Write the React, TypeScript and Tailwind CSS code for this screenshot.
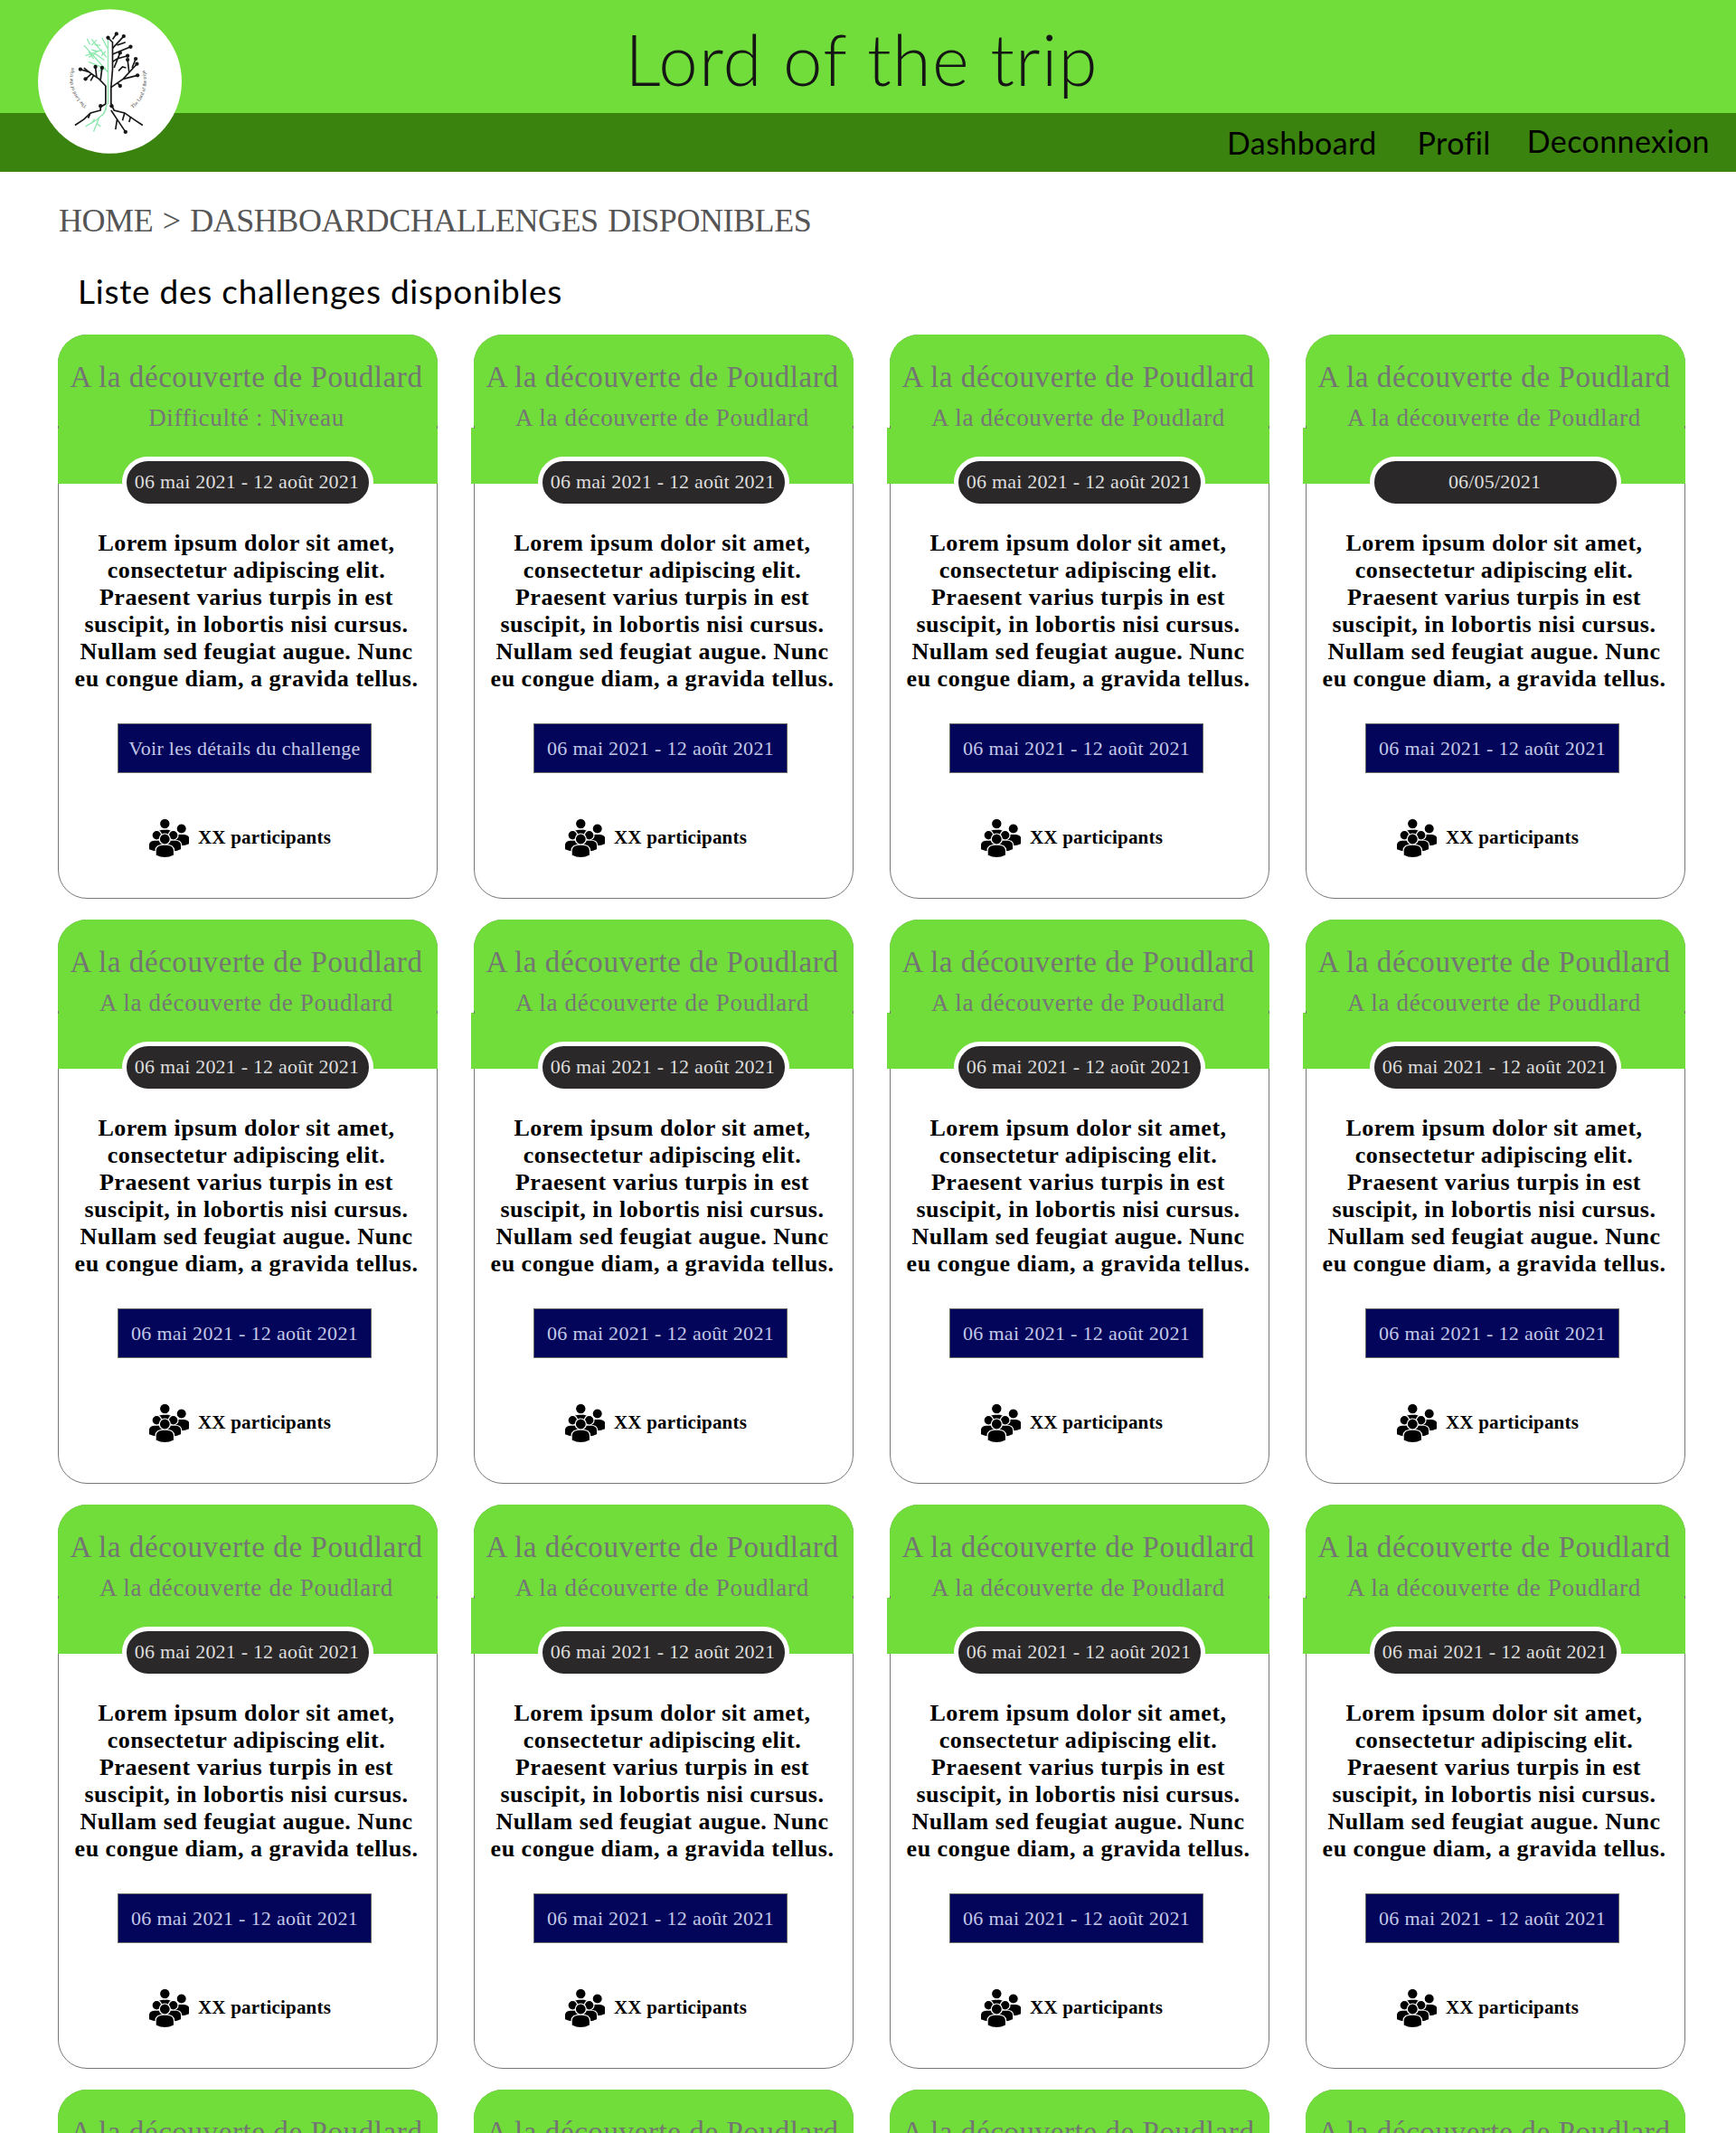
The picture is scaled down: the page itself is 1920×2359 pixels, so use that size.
const DATE = "06 mai 2021 - 12 août 2021";
const LOREM = [
  "Lorem ipsum dolor sit amet,",
  "consectetur adipiscing elit.",
  "Praesent varius turpis in est",
  "suscipit, in lobortis nisi cursus.",
  "Nullam sed feugiat augue. Nunc",
  "eu congue diam, a gravida tellus.",
];

type Challenge = { id: number; sub: string; pill: string; button: string; first: boolean };

const CHALLENGES: Challenge[] = Array.from({ length: 16 }).map((_, i) => ({
  id: i,
  sub: i === 0 ? "Difficulté : Niveau" : "A la découverte de Poudlard",
  pill: i === 3 ? "06/05/2021" : DATE,
  button: i === 0 ? "Voir les détails du challenge" : DATE,
  first: i % 4 === 0,
}));

function TreeLogo() {
  const black = [
    "M262 345V285L240 262L205 238L178 230",
    "M232 256L228 222M215 245L195 262M205 238L190 225M222 250L212 268M245 265L250 225",
    "M280 345V290L320 262L366 212",
    "M280 290L285 230V140L270 125",
    "M285 180L345 155M285 160L322 120M290 225L310 175M300 150L328 140M285 205L300 195L335 185M285 130L298 112",
    "M320 262L368 250M340 240L335 198M350 225L362 195M300 275L312 285M305 235L318 222L330 225",
    "M262 345L245 355V366L212 375L190 396L160 416",
    "M280 345L290 366L325 375L355 396L385 416",
    "M280 366L300 396L328 438M300 396L295 430M325 375L318 400M345 388L340 405M210 378L204 392",
  ];
  const green = [
    "M270 345V130",
    "M270 240L235 200L190 150M255 225L205 205M265 190L215 130M250 165L195 185M268 160L250 125M235 170L215 165",
    "M258 200L228 178L205 190M245 150L225 148M232 132L215 150M262 225L240 235M248 185L262 170M210 148L200 128M222 195L205 170",
    "M266 345L258 375L232 398L195 420M240 392L222 437M250 385L265 360M232 410L245 420M215 410L225 395",
  ];
  const dots = [
    [178, 230], [228, 222], [195, 262], [366, 212], [322, 120], [345, 155], [310, 175], [368, 250], [335, 198],
    [270, 125], [328, 438], [245, 352], [282, 352], [310, 285], [298, 112], [335, 185], [362, 195], [250, 225],
  ];
  return (
    <svg viewBox="37 30 478 480" className="w-[159px] h-[160px]">
      <ellipse cx="276" cy="270" rx="239" ry="240" fill="#fff" />
      <g fill="none" stroke="#8de8ae" strokeWidth="4">
        {green.map((d) => (
          <path key={d} d={d} />
        ))}
      </g>
      <g fill="none" stroke="#161616" strokeWidth="5">
        {black.map((d) => (
          <path key={d} d={d} />
        ))}
      </g>
      {dots.map(([cx, cy]) => (
        <circle key={`${cx}-${cy}`} cx={cx} cy={cy} r="6.5" fill="#161616" />
      ))}
      <path id="arc-left" d="M200 352A115 115 0 0 1 170 198" fill="none" />
      <path id="arc-right" d="M352 360A115 115 0 0 0 378 205" fill="none" />
      <text className="font-['Liberation_Serif',serif]" fontSize="17" fill="#333">
        <textPath href="#arc-left">The Lord of the trips</textPath>
      </text>
      <text className="font-['Liberation_Serif',serif]" fontSize="17" fill="#333">
        <textPath href="#arc-right">The Lord of the trips</textPath>
      </text>
    </svg>
  );
}

function PeopleIcon() {
  const person = (cx: number, cy: number, r: number) => (
    <g stroke="#fff" strokeWidth="1.2" fill="#000">
      <path d={`M${cx - r * 1.7} ${cy + r * 3}v${-r * 0.9}q0 ${-r * 1.1} ${r * 1.7} ${-r * 1.1}t${r * 1.7} ${r * 1.1}v${r * 0.9}q${-r * 1.7} ${r * 0.9} ${-r * 3.4} 0z`} />
      <circle cx={cx} cy={cy} r={r} />
    </g>
  );
  return (
    <svg viewBox="0 0 44 44" className="w-[44px] h-[44px] shrink-0">
      {person(35.7, 11.5, 5.6)}
      {person(17.3, 6, 5.8)}
      {person(8.3, 18.7, 5.3)}
      {person(26.7, 18.7, 5.3)}
      {person(17.3, 23, 6)}
    </svg>
  );
}

function ChallengeCard({ challenge }: { challenge: Challenge }) {
  return (
    <div className="h-[624px] rounded-[32px] border border-[#777] bg-white flex flex-col">
      {/* Green header */}
      <div className="relative -mx-px -mt-px h-[165px] shrink-0">
        <div className="h-[103px] rounded-t-[32px] bg-[#70dd3a] pt-[23px] pr-[3px] text-center">
          <h3 className="text-[33px] tracking-[0.6px] leading-[48px] text-[#747474] whitespace-nowrap">A la découverte de Poudlard</h3>
          <p className="text-[27px] tracking-[0.7px] leading-[30px] mt-[6px] text-[#767676] whitespace-nowrap">{challenge.sub}</p>
        </div>
        <div className={`h-[62px] bg-[#70dd3a] ${challenge.first ? "" : "-ml-[3px]"}`} />
        <span className="absolute left-0 top-[101px] w-px h-[3px] bg-[#777]" />
        <span className="absolute right-0 top-[101px] w-px h-[3px] bg-[#777]" />
        <div className="absolute left-[71px] top-[135px] w-[278px] h-[57px] pr-[2px] pb-[2px] rounded-full border-[5px] border-white bg-[#2a2829] flex items-center justify-center text-[#dedede] text-[22px] tracking-[0.2px] whitespace-nowrap">
          {challenge.pill}
        </div>
      </div>

      {/* Body */}
      <div className="flex flex-col items-center pt-[51px]">
        <p className="mr-[3px] text-center font-bold text-[26px] tracking-[0.5px] leading-[30px] text-black">
          {LOREM.map((line) => (
            <span key={line} className="block whitespace-nowrap">
              {line}
            </span>
          ))}
        </p>
        <div className="mt-[34px] mr-[7px] w-[281px] h-[55px] border border-[#666] bg-[#03055a] flex items-center justify-center text-[#c4c8e8] text-[22px] tracking-[0.3px] whitespace-nowrap">
          {challenge.button}
        </div>
        <div className="mt-[50px] mr-[17px] flex items-center gap-[10px]">
          <PeopleIcon />
          <span className="font-bold text-[21px] tracking-[0.2px] text-black whitespace-nowrap">XX participants</span>
        </div>
      </div>
    </div>
  );
}

export default function App() {
  return (
    <div className="h-[2359px] overflow-hidden bg-white font-['Liberation_Serif',serif]">
      {/* Header */}
      <header className="relative">
        <div className="h-[125px] bg-[#70dd3a] flex items-center justify-center pr-[14px] pt-[4px]">
          <h1 className="text-[78px] leading-none font-['Lato',sans-serif] font-light text-[#151515] tracking-[1.2px]">Lord of the trip</h1>
        </div>
        <nav className="h-[65px] bg-[#3a830f] flex justify-end items-start pt-[11px] pr-[29px] font-['Lato',sans-serif] text-[34px] tracking-[0.4px] leading-[44px] text-black">
          <a className="mr-[45px]">Dashboard</a>
          <a className="mr-[40px]">Profil</a>
          <a className="-mt-[2px]">Deconnexion</a>
        </nav>
        <div className="absolute left-[42px] top-[10px] w-[159px] h-[160px]">
          <TreeLogo />
        </div>
      </header>

      <main className="pl-[64px] pt-[31px]">
        <p className="ml-px text-[36px] tracking-[-0.45px] [word-spacing:2px] leading-[46px] text-[#555] whitespace-nowrap">HOME &gt; DASHBOARDCHALLENGES DISPONIBLES</p>
        <h2 className="mt-[32px] ml-[22px] font-['Lato',sans-serif] text-[37px] tracking-[0.75px] leading-[46px] text-black whitespace-nowrap">
          Liste des challenges disponibles
        </h2>
        <div className="mt-[25px] grid grid-cols-[repeat(4,420px)] gap-x-[40px] gap-y-[23px]">
          {CHALLENGES.map((c) => (
            <ChallengeCard key={c.id} challenge={c} />
          ))}
        </div>
      </main>
    </div>
  );
}
